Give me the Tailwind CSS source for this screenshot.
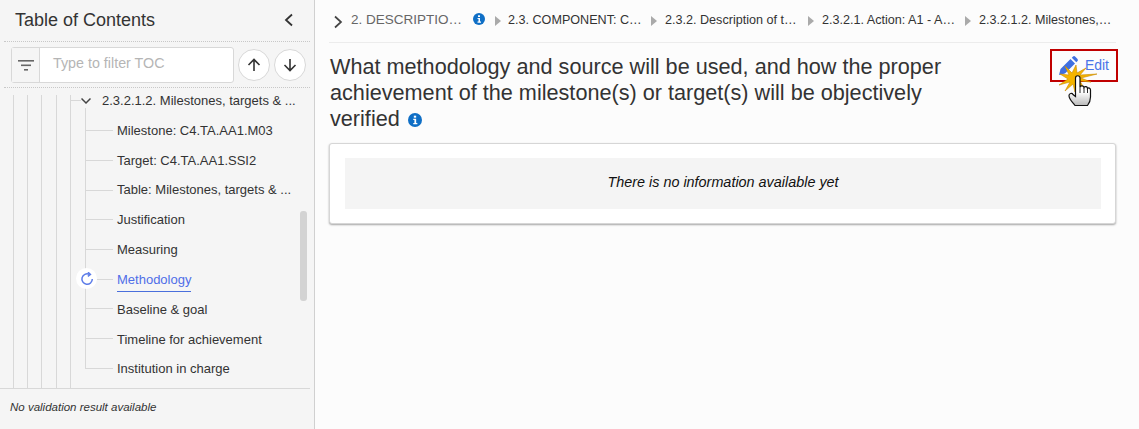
<!DOCTYPE html>
<html lang="en">
<head>
<meta charset="utf-8"/>
<title>Methodology</title>
<script src="https://cdn.jsdelivr.net/npm/@tailwindcss/browser@4"></script>
</head>
<body class="h-[429px] w-[1139px] overflow-hidden bg-[#fcfcfc] font-['Liberation_Sans',Arial,sans-serif] text-[#333]">
<div class="flex h-full">
  <!-- sidebar -->
  <aside class="flex h-full w-[315px] shrink-0 flex-col border-r border-[#d0d0d0] bg-[#f5f5f5] pr-1">
    <div class="flex h-[41px] items-center justify-between pb-[2px] pl-[15px] pr-[13px]">
      <h2 class="text-[18px] leading-[38px] text-[#333]">Table of Contents</h2>
      <svg class="h-4 w-4 text-[#333]" viewBox="0 0 16 16" fill="none" stroke="currentColor" stroke-width="1.8"><path d="M11 2.5 5 8l6 5.500"/></svg>
    </div>
    <div class="ml-1 flex h-[47px] items-center gap-1 border-y border-dotted border-[#c8c8c8] pl-[7px]">
      <div class="flex h-[36px] w-[223px] rounded-[3px] border border-[#d8d8d8] bg-white">
        <div class="flex w-[28px] items-center justify-center border-r border-[#d8d8d8] bg-[#f5f5f5]">
          <svg class="h-[14px] w-[18px]" viewBox="0 0 18 14" fill="#666"><rect x="1" y="2" width="16" height="1.600"/><rect x="4" y="6.500" width="10" height="1.600"/><rect x="7" y="11" width="4" height="1.600"/></svg>
        </div>
        <span class="pl-[13px] text-[14.300px] leading-[31px] text-[#b5b5b5]">Type to filter TOC</span>
      </div>
      <button class="flex h-8 w-8 items-center justify-center rounded-full border border-[#d8d8d8] bg-white">
        <svg class="h-4 w-4" viewBox="0 0 16 16" fill="none" stroke="#333" stroke-width="1.600"><path d="M8 14V2.500M2.500 8 8 2.500 13.500 8"/></svg>
      </button>
      <button class="flex h-8 w-8 items-center justify-center rounded-full border border-[#d8d8d8] bg-white">
        <svg class="h-4 w-4" viewBox="0 0 16 16" fill="none" stroke="#333" stroke-width="1.600"><path d="M8 2v11.500M2.500 8 8 13.500 13.500 8"/></svg>
      </button>
    </div>
    <!-- tree -->
    <div class="relative flex-1 overflow-hidden text-[13px]">
      <div class="absolute bottom-0 left-[13px] top-[7px] w-px bg-[#d8d8d8]"></div>
      <div class="absolute bottom-0 left-[27px] top-[7px] w-px bg-[#d8d8d8]"></div>
      <div class="absolute bottom-0 left-[41px] top-[7px] w-px bg-[#d8d8d8]"></div>
      <div class="absolute bottom-0 left-[56px] top-[7px] w-px bg-[#d8d8d8]"></div>
      <div class="absolute bottom-0 left-[70px] top-[7px] w-px bg-[#d8d8d8]"></div>
      <div class="absolute left-[85px] top-[20px] h-[261px] w-px bg-[#d8d8d8]"></div>
      <div class="absolute right-[3px] top-[123px] h-[90px] w-[7px] rounded-[3px] bg-[#d3d3d3]"></div>

      <div class="flex h-[28px] items-center pb-[3px]">
        <div class="h-px w-[10px] translate-x-[71px] bg-[#d8d8d8]"></div>
        <svg class="ml-[71px] h-[10px] w-[10px] shrink-0 text-[#444]" viewBox="0 0 10 10" fill="none" stroke="currentColor" stroke-width="1.500"><path d="M.5 2.500 5 7l4.500-4.500"/></svg>
        <span class="ml-[11px] whitespace-nowrap">2.3.2.1.2. Milestones, targets &amp; ...</span>
      </div>
      <div class="flex h-[29.700px] items-center pl-[86px]"><div class="h-px w-[27px] bg-[#d8d8d8]"></div><span class="ml-1 whitespace-nowrap">Milestone: C4.TA.AA1.M03</span></div>
      <div class="flex h-[29.700px] items-center pl-[86px]"><div class="h-px w-[27px] bg-[#d8d8d8]"></div><span class="ml-1 whitespace-nowrap">Target: C4.TA.AA1.SSI2</span></div>
      <div class="flex h-[29.700px] items-center pl-[86px]"><div class="h-px w-[27px] bg-[#d8d8d8]"></div><span class="ml-1 whitespace-nowrap">Table: Milestones, targets &amp; ...</span></div>
      <div class="flex h-[29.700px] items-center pl-[86px]"><div class="h-px w-[27px] bg-[#d8d8d8]"></div><span class="ml-1 whitespace-nowrap">Justification</span></div>
      <div class="flex h-[29.700px] items-center pl-[86px]"><div class="h-px w-[27px] bg-[#d8d8d8]"></div><span class="ml-1 whitespace-nowrap">Measuring</span></div>
      <div class="relative flex h-[29.700px] items-center pl-[86px]">
        <div class="absolute left-[76px] top-[4px] z-10 flex h-[21px] w-[21px] items-center justify-center rounded-full bg-white">
          <svg class="h-[14px] w-[14px]" viewBox="0 0 14 14" fill="none" stroke="#5b7be8" stroke-width="1.500"><path d="M9.200 2.300A5.200 5.200 0 1 0 12.300 7"/><path d="M8 .2 10.400 2.500 7.800 4.300" fill="none"/></svg>
        </div>
        <div class="ml-[11px] h-px w-[16px] bg-[#d8d8d8]"></div>
        <span class="ml-1 mt-[5px] border-b border-[#4a6fdc] pb-[2px] leading-[18px] whitespace-nowrap text-[#4f6ee8]">Methodology</span>
      </div>
      <div class="flex h-[29.700px] items-center pl-[86px]"><div class="h-px w-[27px] bg-[#d8d8d8]"></div><span class="ml-1 mt-[1px] whitespace-nowrap">Baseline &amp; goal</span></div>
      <div class="flex h-[29.700px] items-center pl-[86px]"><div class="h-px w-[27px] bg-[#d8d8d8]"></div><span class="ml-1 mt-[2px] whitespace-nowrap">Timeline for achievement</span></div>
      <div class="flex h-[29.700px] items-center pl-[86px]"><div class="h-px w-[27px] bg-[#d8d8d8]"></div><span class="ml-1 mt-[1px] whitespace-nowrap">Institution in charge</span></div>
    </div>
    <div class="h-[41px] border-t border-[#d8d8d8] pl-[10px] text-[11.500px] leading-[36px] italic text-[#333]">No validation result available</div>
  </aside>

  <!-- main -->
  <main class="relative min-w-0 flex-1 pl-[14px] pr-[23px]">
    <nav class="flex h-[43px] items-center border-b border-[#ececec] pl-[4px] pb-[1px] text-[12.600px] whitespace-nowrap text-[#333]">
      <svg class="h-[14px] w-[10px] shrink-0 translate-y-[1px]" viewBox="0 0 10 14" fill="none" stroke="#444" stroke-width="1.700"><path d="M2 1.500 8 7l-6 5.500"/></svg>
      <span class="ml-[8px] w-[111px] text-[13.500px] text-[#666]">2. DESCRIPTIO…</span>
      <svg class="ml-[11px] mb-[3px] h-[12px] w-[12px] shrink-0" viewBox="0 0 12 12"><circle cx="6" cy="6" r="6" fill="#0f6fc6"/><rect x="5" y="2.300" width="2" height="1.700" fill="#fff"/><path d="M4.500 5H7v3.500h1V9.700H4.500V8.500h1V6h-1z" fill="#fff"/></svg>
      <span class="ml-[10px] h-0 w-0 shrink-0 border-y-[5px] border-l-[6px] border-y-transparent border-l-[#aaa]"></span>
      <span class="ml-[7px] w-[135px]">2.3. COMPONENT: C…</span>
      <span class="ml-[8px] h-0 w-0 shrink-0 border-y-[5px] border-l-[6px] border-y-transparent border-l-[#aaa]"></span>
      <span class="ml-[8px] w-[135px]">2.3.2. Description of t…</span>
      <span class="ml-[8px] h-0 w-0 shrink-0 border-y-[5px] border-l-[6px] border-y-transparent border-l-[#aaa]"></span>
      <span class="ml-[8px] w-[135px]">2.3.2.1. Action: A1 - A…</span>
      <span class="ml-[8px] h-0 w-0 shrink-0 border-y-[5px] border-l-[6px] border-y-transparent border-l-[#aaa]"></span>
      <span class="ml-[8px]">2.3.2.1.2. Milestones,…</span>
    </nav>
    <div class="flex justify-between pt-[11px]">
      <h1 class="ml-[1px] w-[640px] text-[21.650px] leading-[26px] text-[#333]">What methodology and source will be used, and how the proper achievement of the milestone(s) or target(s) will be objectively verified
        <svg class="ml-[2px] inline-block h-[14px] w-[14px] align-[-1px]" viewBox="0 0 12 12"><circle cx="6" cy="6" r="6" fill="#0f6fc6"/><rect x="5" y="2.300" width="2" height="1.700" fill="#fff"/><path d="M4.500 5H7v3.500h1V9.700H4.500V8.500h1V6h-1z" fill="#fff"/></svg>
      </h1>
      <button class="mr-[-2px] mt-[-5px] flex h-[33px] w-[68px] items-center justify-end gap-[7px] border-2 border-[#c00000] pr-[7px] text-[14px] text-[#4a74e8]">
        <svg class="h-[20px] w-[20px] shrink-0" viewBox="0 0 20 20" fill="#3f6fe0"><path d="M1 19l1.500-6L12.500 3l4.500 4.500-10 10zM13.800 1.700l1-1a1.800 1.800 0 0 1 2.500 0l2 2a1.800 1.800 0 0 1 0 2.500l-1 1z"/></svg>
        Edit
      </button>
    </div>
    <div class="mt-[11px] rounded-[3px] border border-[#d6d6d6] bg-white py-[14px] pl-[15px] pr-[14px] shadow-[0_1px_2px_rgba(0,0,0,0.35)]">
      <div class="flex h-[51px] items-center justify-center bg-[#f4f4f4] pb-[2px] text-[14.400px] italic text-[#111]">There is no information available yet</div>
    </div>

    <!-- cursor overlay -->
    <svg class="absolute left-[740px] top-[60px] h-[50px] w-[45px]" viewBox="0 0 45 50">
      <defs><linearGradient id="handShade" x1="0" y1="0" x2="0" y2="1"><stop offset="0.55" stop-color="#fff"/><stop offset="1" stop-color="#b8b8b8"/></linearGradient></defs>
      <polygon points="21,5 22,13 31,8 25,15 42,14 26,18 36,22 25,21 30,30 22,23 20,32 18,24 10,31 15,22 4,25 13,19 5,14 14,15 10,6 17,13" fill="#f4b400" stroke="#c98a00" stroke-width=".6"/>
      <path d="M20.500 18c0-3 4.500-3 4.500 0v9c.5-1.500 3.500-1.500 4 .5 1-1.500 3.500-1 3.500 1 1-1 3-.5 3 1.500v7c0 4-1 6-3 8.500H20c-2-3-6-6-6-10 0-2 3-3 4-1l2.500 2z" fill="url(#handShade)" stroke="#111" stroke-width="1.200"/>
      <path d="M25 27v6M29 28v5M32.500 29v4" stroke="#111" stroke-width=".9"/>
    </svg>
  </main>
</div>
</body>
</html>
